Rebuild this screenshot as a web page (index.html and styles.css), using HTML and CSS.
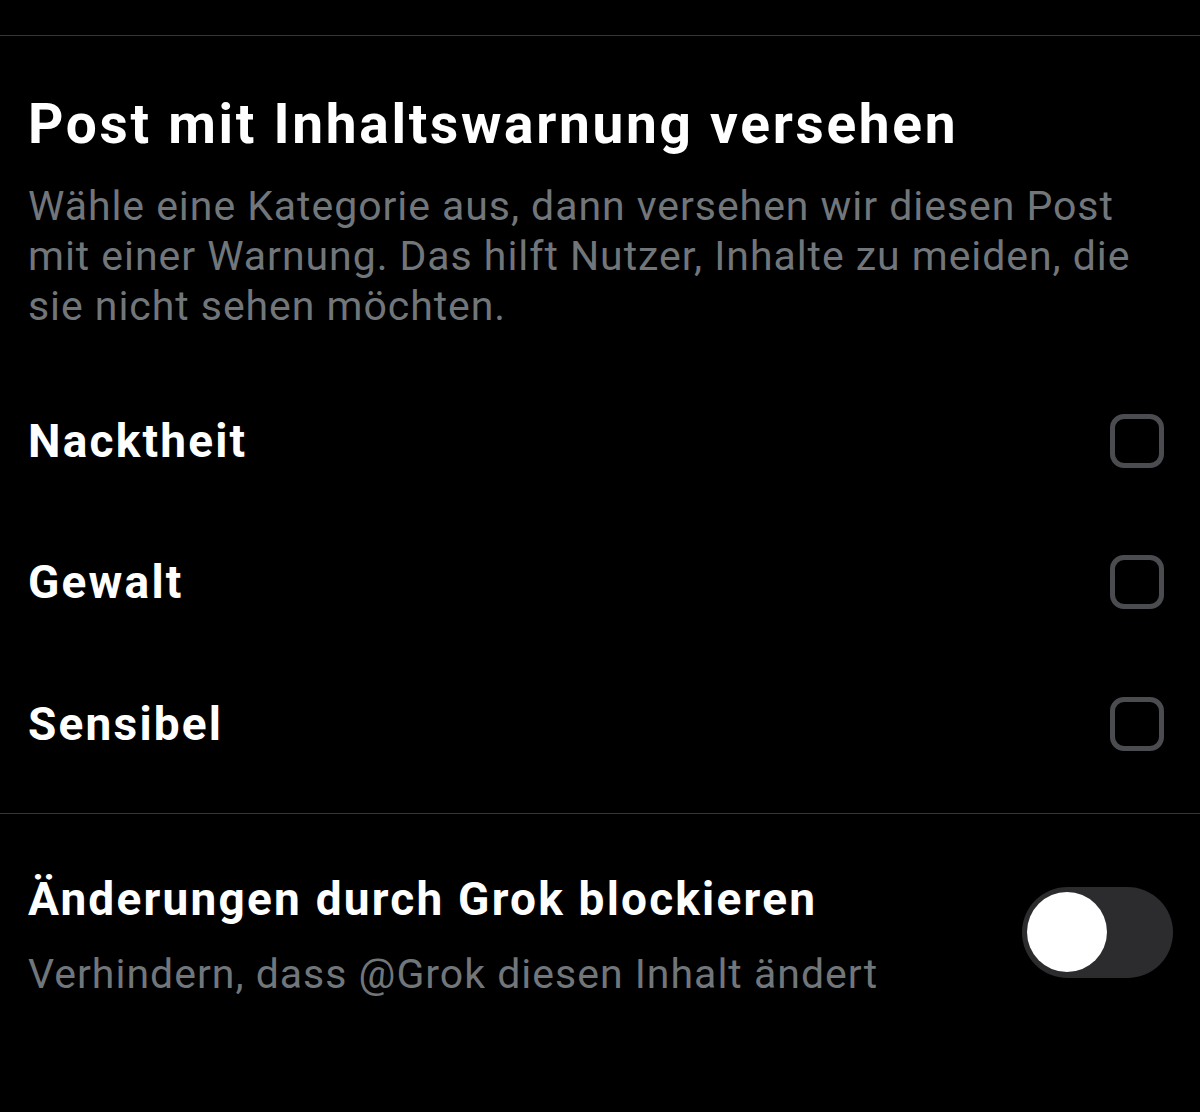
FILE: index.html
```html
<!DOCTYPE html>
<html lang="de">
<head>
<meta charset="utf-8">
<link rel="stylesheet" href="styles.css">
</head>
<body>
<div class="screen">
  <div class="top-spacer"></div>
  <section class="intro">
    <h1 class="title">Post mit Inhaltswarnung versehen</h1>
    <p class="desc">Wähle eine Kategorie aus, dann versehen wir diesen Post mit einer Warnung. Das hilft Nutzer, Inhalte zu meiden, die sie nicht sehen möchten.</p>
  </section>
  <ul class="options">
    <li class="option"><span class="option-label">Nacktheit</span><span class="checkbox"></span></li>
    <li class="option"><span class="option-label">Gewalt</span><span class="checkbox"></span></li>
    <li class="option"><span class="option-label">Sensibel</span><span class="checkbox"></span></li>
  </ul>
  <section class="grok">
    <div class="grok-text">
      <div class="grok-title">Änderungen durch Grok blockieren</div>
      <div class="grok-sub">Verhindern, dass @Grok diesen Inhalt ändert</div>
    </div>
    <div class="toggle"><span class="knob"></span></div>
  </section>
</div>
</body>
</html>
```
FILE: styles.css
```css
html, body {
  margin: 0;
  padding: 0;
  background: #000;
}
body {
  font-family: Roboto, "Liberation Sans", sans-serif;
  color: #e7e9ea;
  width: 1200px;
  height: 1112px;
  overflow: hidden;
}
.top-spacer {
  height: 35px;
  border-bottom: 1px solid #333639;
}
.intro {
  padding: 58px 28px 0;
}
.title {
  margin: 0;
  font-size: 55px;
  font-weight: 700;
  line-height: 60px;
  letter-spacing: 2.7px;
  color: #fff;
}
.desc {
  margin: 27px 0 0;
  font-size: 41px;
  line-height: 50px;
  letter-spacing: 0.95px;
  color: #71767b;
  width: 1140px;
}
.options {
  list-style: none;
  margin: 39px 0 0;
  padding: 0 0 18px;
  border-bottom: 1px solid #333639;
}
.option {
  display: flex;
  align-items: center;
  justify-content: space-between;
  height: 141.5px;
  padding: 0 36px 0 28px;
}
.option-label {
  font-size: 46px;
  line-height: 56px;
  font-weight: 700;
  letter-spacing: 2.2px;
  color: #fff;
}
.checkbox {
  width: 44px;
  height: 44px;
  border: 5px solid #4b4c50;
  border-radius: 14px;
}
.grok {
  display: flex;
  align-items: flex-start;
  justify-content: space-between;
  padding: 57px 27px 0 28px;
}
.grok-title {
  font-size: 46px;
  font-weight: 700;
  color: #fff;
  line-height: 56px;
  letter-spacing: 2.2px;
}
.grok-sub {
  margin-top: 22px;
  font-size: 41px;
  line-height: 50px;
  letter-spacing: 1px;
  color: #71767b;
}
.toggle {
  margin-top: 16px;
  width: 151px;
  height: 91px;
  border-radius: 46px;
  background: #2c2c2f;
  display: flex;
  align-items: center;
  padding-left: 5px;
  box-sizing: border-box;
}
.knob {
  width: 80px;
  height: 80px;
  border-radius: 50%;
  background: #fff;
}
```
